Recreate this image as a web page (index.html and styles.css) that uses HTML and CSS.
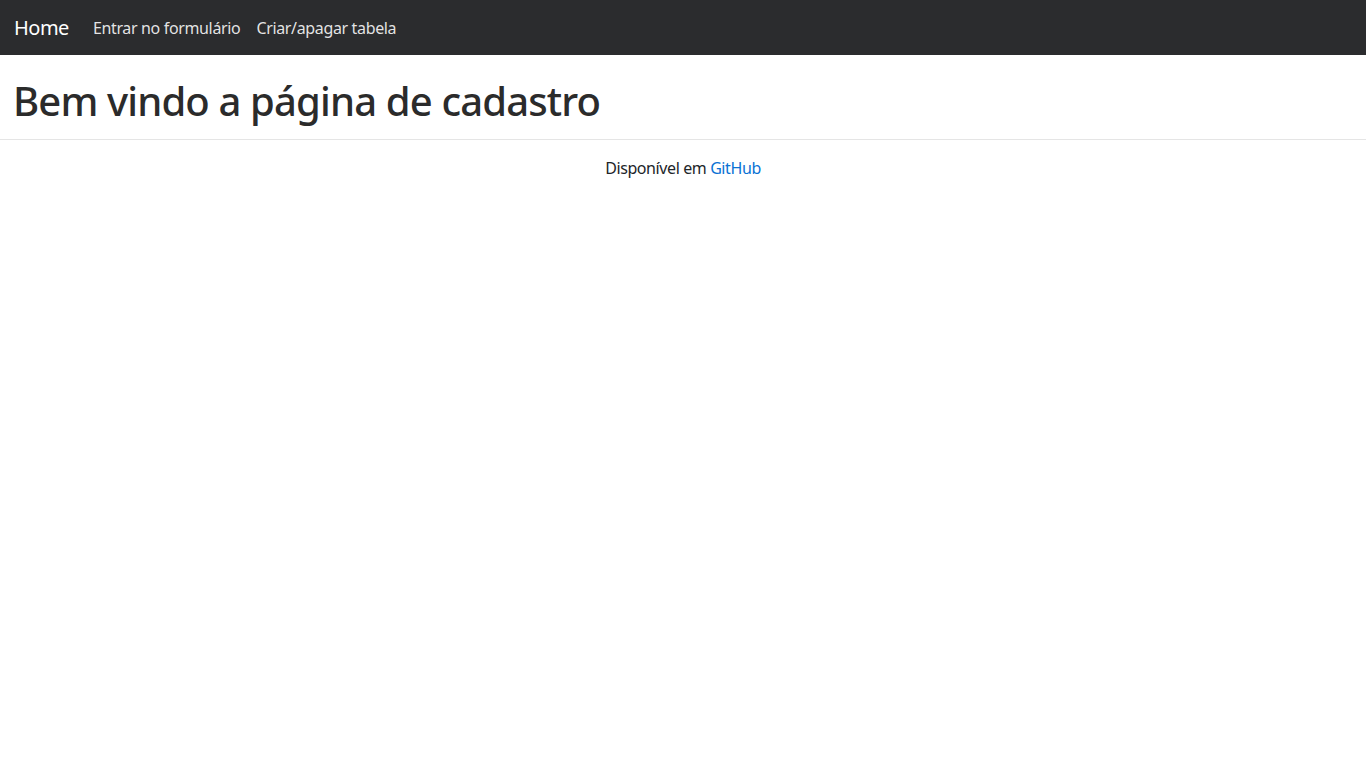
FILE: index.html
```html
<!DOCTYPE html>
<html lang="pt-BR">
<head>
<meta charset="utf-8">
<title>Cadastro</title>
<link rel="stylesheet" href="styles.css">
</head>
<body>
<nav class="navbar">
  <a class="brand" href="#">Home</a>
  <ul class="nav">
    <li><a class="nav-link" href="#">Entrar no formulário</a></li>
    <li><a class="nav-link" href="#">Criar/apagar tabela</a></li>
  </ul>
</nav>
<header class="page-header">
  <h1>Bem vindo a página de cadastro</h1>
</header>
<footer class="footer">
  <p>Disponível em <a href="#">GitHub</a></p>
</footer>
</body>
</html>
```
FILE: styles.css
```css
* { box-sizing: border-box; }
body {
  margin: 0;
  font-family: "Noto Sans", "Open Sans", sans-serif;
  font-size: 16px;
  line-height: 1.5;
  color: #212529;
  background: #fff;
}
.navbar {
  display: flex;
  align-items: center;
  height: 55px;
  padding: 0 14px;
  background: #2b2c2e;
}
.brand {
  color: #fff;
  font-size: 20px;
  letter-spacing: -0.5px;
  text-decoration: none;
  margin-right: 16px;
}
.nav {
  display: flex;
  list-style: none;
  margin: 0;
  padding: 0;
}
.nav-link {
  display: block;
  padding: 8px 8px;
  color: rgba(255,255,255,0.88);
  text-decoration: none;
  font-size: 16px;
  letter-spacing: -0.35px;
}
.page-header {
  padding: 22px 13px 14px;
  border-bottom: 1px solid #e5e5e5;
}
.page-header h1 {
  margin: 0;
  font-size: 40px;
  font-weight: 500;
  line-height: 48px;
  letter-spacing: -0.85px;
  color: #2b2b2b;
}
.footer {
  text-align: center;
  padding-top: 16px;
}
.footer p { margin: 0; letter-spacing: -0.4px; }
.footer a {
  color: #0a72d4;
  text-decoration: none;
}
```
